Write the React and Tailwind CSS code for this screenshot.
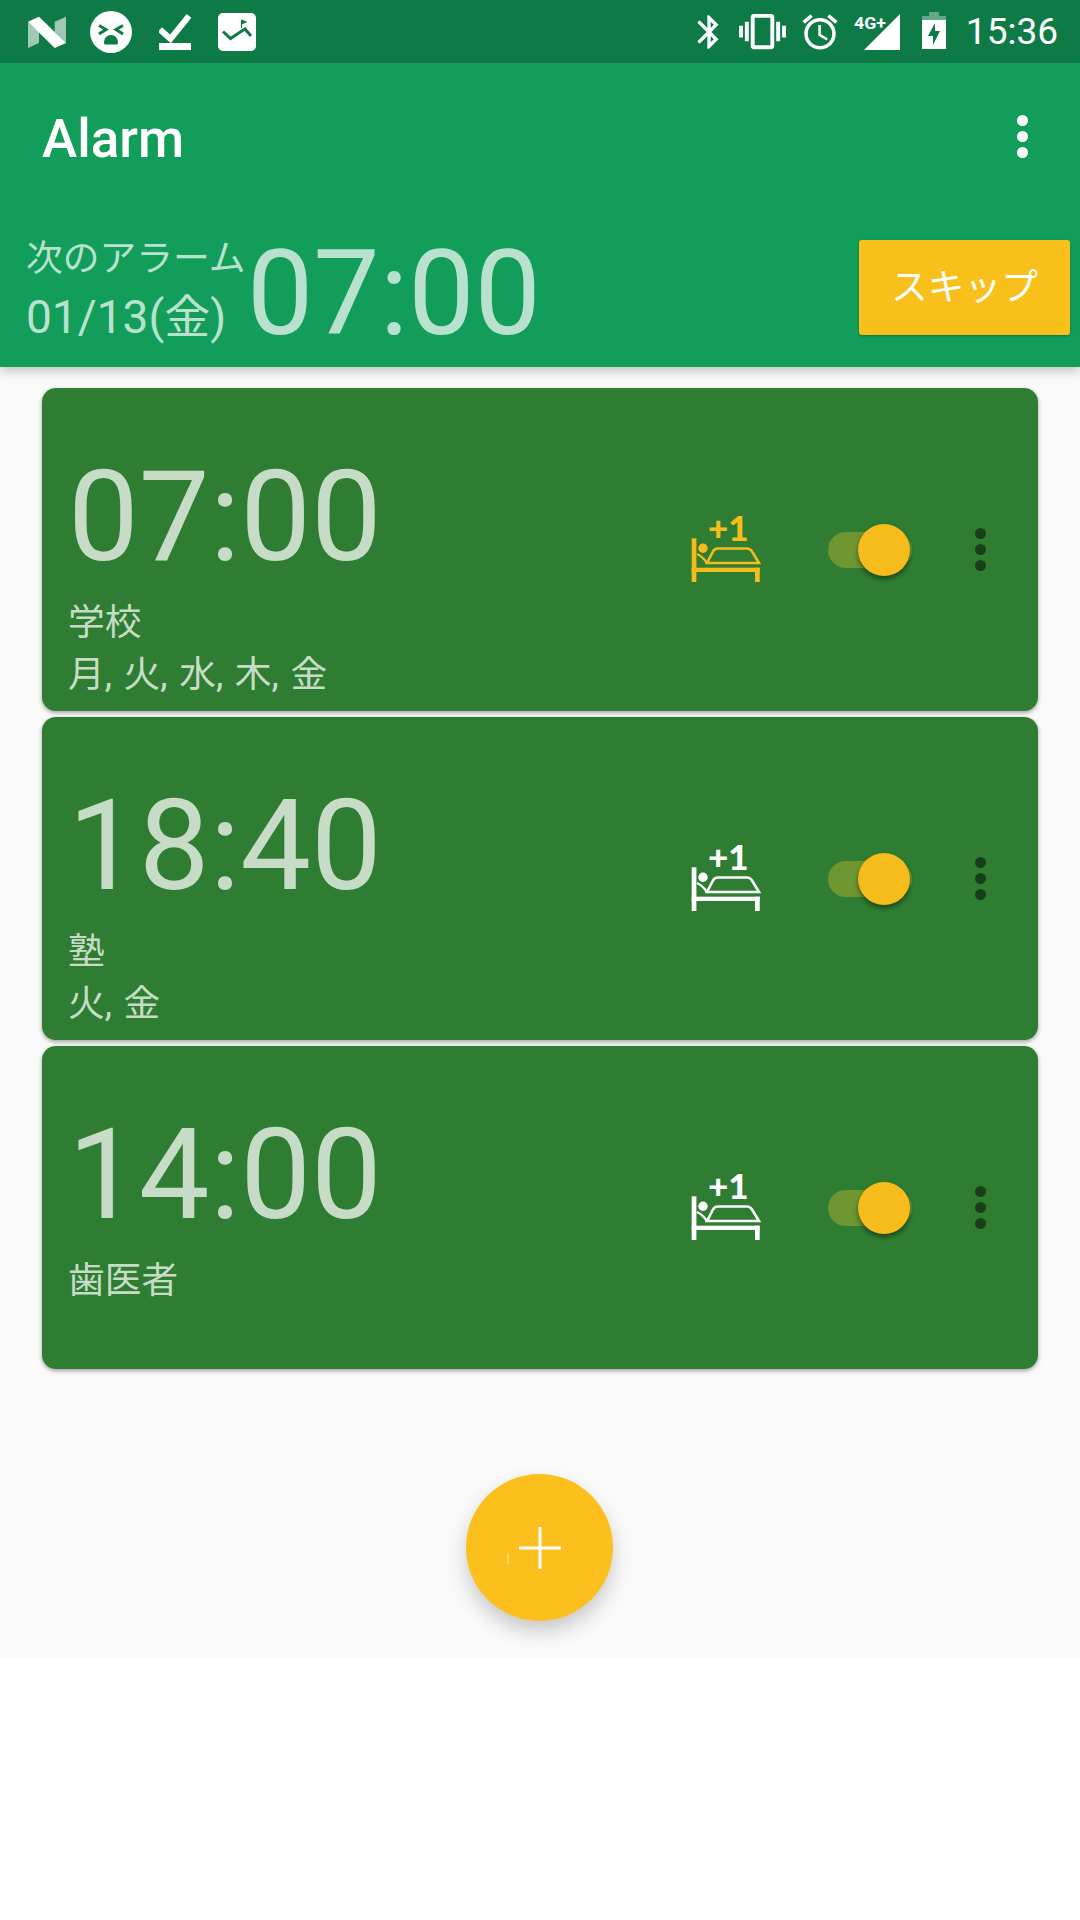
import React from "react";

const alarms = [
  { time: "07:00", label: "学校", days: "月, 火, 水, 木, 金", snooze: true },
  { time: "18:40", label: "塾", days: "火, 金", snooze: false },
  { time: "14:00", label: "歯医者", days: "", snooze: false },
];

const font = "font-['Roboto','Noto_Sans_CJK_JP',sans-serif]";

const StatusLeft = () => (
  <div className="flex items-center">
    {/* N logo */}
    <svg viewBox="0 0 39 32" className="w-[39px] h-[32px] ml-[28px] fill-white">
      <path d="M0 5.7L11 16V27L0 32Z" opacity="0.6" />
      <path d="M26.7 5.7L38 .7V27L26.7 16Z" opacity="0.6" />
      <path d="M0 5.7L11 .7L38 27L26.7 32Z" />
    </svg>
    {/* face */}
    <svg viewBox="0 0 42 42" className="w-[42px] h-[42px] ml-[23px]">
      <circle cx="21" cy="21" r="21" fill="#fff" />
      <path d="M9 14.5L16 18.5L9 23M33 14.5L26 18.5L33 23" fill="none" stroke="#0E7B47" strokeWidth="3" />
      <path d="M14 32c0-5 3-8 7-8s7 3 7 8c0 1-1 1.500-2 1.500H16c-1 0-2-.5-2-1.500z" fill="#0E7B47" />
    </svg>
    {/* download done */}
    <svg viewBox="0 0 32 38" className="w-[32px] h-[38px] ml-[27px] fill-white">
      <path d="M1 16.500L11.500 26L30 3" fill="none" stroke="#fff" strokeWidth="6" />
      <rect x="0" y="30" width="32" height="7" />
    </svg>
    {/* picture */}
    <svg viewBox="0 0 38 38" className="w-[38px] h-[38px] ml-[27px]">
      <rect width="38" height="38" rx="5" fill="#fff" />
      <path d="M5 18.500L12.500 25.500L23 18.500L27 16L33 23" fill="none" stroke="#0E7B47" strokeWidth="3" />
      <path d="M23.500 15V7M23.500 7L28 9L23.500 11" fill="#0E7B47" stroke="#0E7B47" strokeWidth="1.200" />
    </svg>
  </div>
);

const StatusRight = () => (
  <div className="flex items-center ml-auto">
    <svg viewBox="0 0 24 24" className="w-[40px] h-[40px] fill-white">
      <path d="M17.71 7.71L12 2h-1v7.59L6.410 5 5 6.410 10.590 12 5 17.590 6.410 19 11 14.410V22h1l5.710-5.710-4.300-4.290 4.300-4.290zM13 5.830l1.880 1.880L13 9.590V5.830zm1.880 10.460L13 18.170v-3.760l1.880 1.880z" />
    </svg>
    <svg viewBox="0 0 24 24" className="w-[47px] h-[47px] ml-[10px] fill-white">
      <path d="M0 15h2V9H0v6zm3 2h2V7H3v10zm19-8v6h2V9h-2zm-3 8h2V7h-2v10zM16.500 3h-9C6.670 3 6 3.670 6 4.500v15c0 .83.67 1.500 1.500 1.500h9c.83 0 1.500-.67 1.500-1.500v-15c0-.83-.67-1.500-1.500-1.500zM16 19H8V5h8v14z" />
    </svg>
    <svg viewBox="0 0 24 24" className="w-[42px] h-[42px] ml-[13px] fill-white">
      <path d="M22 5.720l-4.600-3.860-1.290 1.530 4.600 3.860L22 5.720zM7.880 3.390L6.600 1.860 2 5.710l1.290 1.530 4.590-3.850zM12.500 8H11v6l4.750 2.850.75-1.230-4-2.370V8zM12 4c-4.970 0-9 4.030-9 9s4.030 9 9 9c4.970 0 9-4.030 9-9s-4.030-9-9-9zm0 16c-3.870 0-7-3.130-7-7s3.130-7 7-7 7 3.130 7 7-3.130 7-7 7z" />
    </svg>
    {/* 4G+ signal */}
    <svg viewBox="0 -4 46 42" className="w-[46px] h-[42px] ml-[13px] -mt-[4px] fill-white">
      <path d="M10 37L46 1V37Z" />
      <text x="0" y="16" fontFamily="Roboto" fontWeight="700" fontSize="16" textLength="32" lengthAdjust="spacingAndGlyphs">4G+</text>
    </svg>
    {/* battery */}
    <svg viewBox="0 0 24 38" className="w-[24px] h-[38px] ml-[22px] -mt-[2px]">
      <path d="M7 0H17V4H24V9H0V4H7Z" fill="#fff" opacity="0.35" />
      <path d="M0 8H24V37H0Z" fill="#fff" />
      <path d="M13 11L6 24H11V33L18 19H13Z" fill="#0E7B47" />
    </svg>
    <span className={`${font} ml-[20px] mr-[22px] text-[37px] leading-none text-white`}>15:36</span>
  </div>
);

const BedIcon = ({ color }) => (
  <svg viewBox="0 -14 74 80" className="w-[74px] h-[80px] mb-[16px]" style={{ color }}>
    <g fill="currentColor">
      <rect x="4.700" y="22.300" width="4.700" height="43.700" />
      <rect x="4.700" y="51.700" width="68" height="4.300" />
      <rect x="68" y="51.700" width="4.700" height="14.300" />
      <circle cx="16" cy="32.300" r="4.700" />
      <text x="21" y="25" fontFamily="Lato" fontWeight="900" fontSize="35">+1</text>
    </g>
    <path
      d="M20 47L26 35.500Q27.500 32.500 31 32.500H60Q63 32.500 65 35.500L72 47Z"
      fill="none"
      stroke="currentColor"
      strokeWidth="2.600"
    />
    <path d="M10 38Q15 40 20 47" fill="none" stroke="currentColor" strokeWidth="2.400" />
  </svg>
);

const AlarmCard = ({ alarm }) => (
  <div className="flex items-center h-[323px] rounded-[14px] bg-[#2F7D32] shadow-[0_2px_4px_rgba(0,0,0,0.35)]">
    <div className="flex flex-col w-[645px] pl-[26px] pt-[58px] text-[#C6DCC7]">
      <div className="text-[126px] leading-[126px] -mt-[2px]">{alarm.time}</div>
      <div className="text-[36.75px] leading-[52px] mt-[17px] h-[52px]">{alarm.label}</div>
      <div className="text-[36.75px] leading-[52px] h-[52px] [word-spacing:2.5px]">{alarm.days}</div>
    </div>
    <BedIcon color={alarm.snooze ? "#F6BC1B" : "#ffffff"} />
    <div className="relative w-[84px] h-[36px] ml-[67px] rounded-full bg-[#6F9731]">
      <div className="absolute left-[30px] -top-[8px] w-[52px] h-[52px] rounded-full bg-[#F6BC1B] shadow-[0_3px_5px_rgba(0,0,0,0.45)]" />
    </div>
    <div className="flex flex-col gap-[5px] ml-[63px]">
      <span className="w-[11px] h-[11px] rounded-full bg-[#193F1A]" />
      <span className="w-[11px] h-[11px] rounded-full bg-[#193F1A]" />
      <span className="w-[11px] h-[11px] rounded-full bg-[#193F1A]" />
    </div>
  </div>
);

export default function App() {
  return (
    <div className={`${font} w-[1080px] h-[1920px] bg-white overflow-hidden`}>
      <div className="flex items-center h-[63px] bg-[#0E7B47]">
        <StatusLeft />
        <StatusRight />
      </div>

      <div className="relative z-10 h-[304px] bg-[#129E5A] shadow-[0_4px_10px_rgba(0,0,0,0.22)]">
        <div className="flex items-center h-[150px] pl-[42px] pr-[52px]">
          <span className="text-[53px] font-medium text-white pt-[4px]">Alarm</span>
          <div className="flex flex-col gap-[5px] ml-auto mb-[4px]">
            <span className="w-[11px] h-[11px] rounded-full bg-white" />
            <span className="w-[11px] h-[11px] rounded-full bg-white" />
            <span className="w-[11px] h-[11px] rounded-full bg-white" />
          </div>
        </div>
        <div className="flex items-start pl-[26px] pr-[10px] pt-[16px]">
          <div className="flex flex-col text-[#B9E2CE] leading-[59px] w-[219px]">
            <span className="whitespace-nowrap text-[36.75px]">次のアラーム</span>
            <span className="whitespace-nowrap text-[46px]">01/13(金)</span>
          </div>
          <div className="text-[118px] leading-[115px] text-[#B9E2CE] ml-[2px] mt-[8px]">07:00</div>
          <button className="ml-auto mt-[11px] flex items-center justify-center w-[211px] h-[95px] rounded-[3px] bg-[#F9C01C] text-[36.75px] text-white shadow-[0_1px_3px_rgba(0,0,0,0.3)]">
            スキップ
          </button>
        </div>
      </div>

      <div className="flex flex-col bg-[#FAFAFA] pt-[21px] pb-[36px]">
        <div className="flex flex-col gap-[6px] px-[42px]">
          {alarms.map(alarm => (
            <AlarmCard key={alarm.time} alarm={alarm} />
          ))}
        </div>
        <div className="flex justify-center mt-[105px]">
          <button className="flex items-center justify-center w-[147px] h-[147px] mr-[1px] rounded-full bg-[#FBC01E] shadow-[0_10px_20px_rgba(0,0,0,0.2)]">
            {/* plus, with the stray hairline the original has left of it */}
            <svg viewBox="-14 0 58 44" className="w-[58px] h-[44px] mr-[14px]">
              <path d="M22 1V43M1 22H43" stroke="#fff" strokeWidth="3" />
              <path d="M-10 27V38" stroke="#fff" strokeWidth="1" opacity="0.6" />
            </svg>
          </button>
        </div>
      </div>
    </div>
  );
}
